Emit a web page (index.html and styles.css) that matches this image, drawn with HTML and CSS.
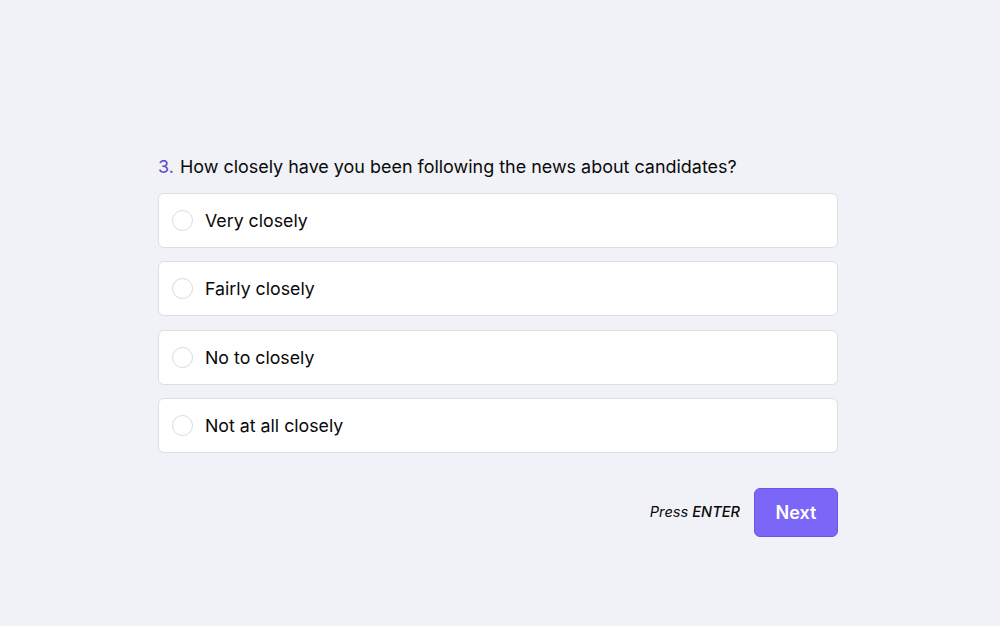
FILE: index.html
```html
<!DOCTYPE html>
<html lang="en">
<head>
  <meta charset="UTF-8" />
  <meta name="viewport" content="width=device-width, initial-scale=1" />
  <title>Survey</title>
  <link rel="stylesheet" href="styles.css">
</head>
<body>

  <div class="survey">
    <h2 class="question"><span class="num">3.</span> How closely have you been following the news about candidates?</h2>

    <div class="options">
      <label class="option"><span class="radio"></span>Very closely</label>
      <label class="option"><span class="radio"></span>Fairly closely</label>
      <label class="option"><span class="radio"></span>No to closely</label>
      <label class="option"><span class="radio"></span>Not at all closely</label>
    </div>

    <div class="actions">
      <span class="hint">Press <strong>ENTER</strong></span>
      <button class="next">Next</button>
    </div>
  </div>

</body>
</html>
```

FILE: styles.css
```css
body {
  font-family: Inter, "Noto Sans", sans-serif;
  background-color: #f1f2f7;
  margin: 0;
  padding: 155px 4px 0 0;
  display: flex;
  justify-content: center;
  color: #0a0a0a;
}

.survey {
  width: 680px;
}

.question {
  font-size: 17.95px;
  font-weight: 400;
  line-height: 24px;
  margin: 0 0 14px;
  color: #0a0a0a;
}

.num {
  color: #5a48c8;
  margin-right: 1px;
}

.options {
  display: flex;
  flex-direction: column;
  gap: 13.3px;
}

.option {
  display: flex;
  align-items: center;
  height: 55px;
  box-sizing: border-box;
  padding: 0 13px;
  background-color: #fff;
  border: 1px solid #dcdde6;
  border-radius: 6px;
  font-size: 17.75px;
  cursor: pointer;
}

.radio {
  width: 19px;
  height: 19px;
  border: 1px solid #d8d9e0;
  border-radius: 50%;
  margin-right: 12px;
  flex-shrink: 0;
}

.actions {
  display: flex;
  justify-content: flex-end;
  align-items: center;
  gap: 14px;
  margin-top: 35px;
}

.hint {
  font-size: 14.6px;
  font-style: italic;
  color: #0a0a0a;
}

.hint strong {
  font-weight: 500;
}

.next {
  width: 84px;
  height: 49px;
  background-color: #7b67f7;
  border: 1px solid #6a55e4;
  border-radius: 6px;
  color: #fff;
  font-family: inherit;
  font-size: 18px;
  font-weight: 600;
  cursor: pointer;
}
```
